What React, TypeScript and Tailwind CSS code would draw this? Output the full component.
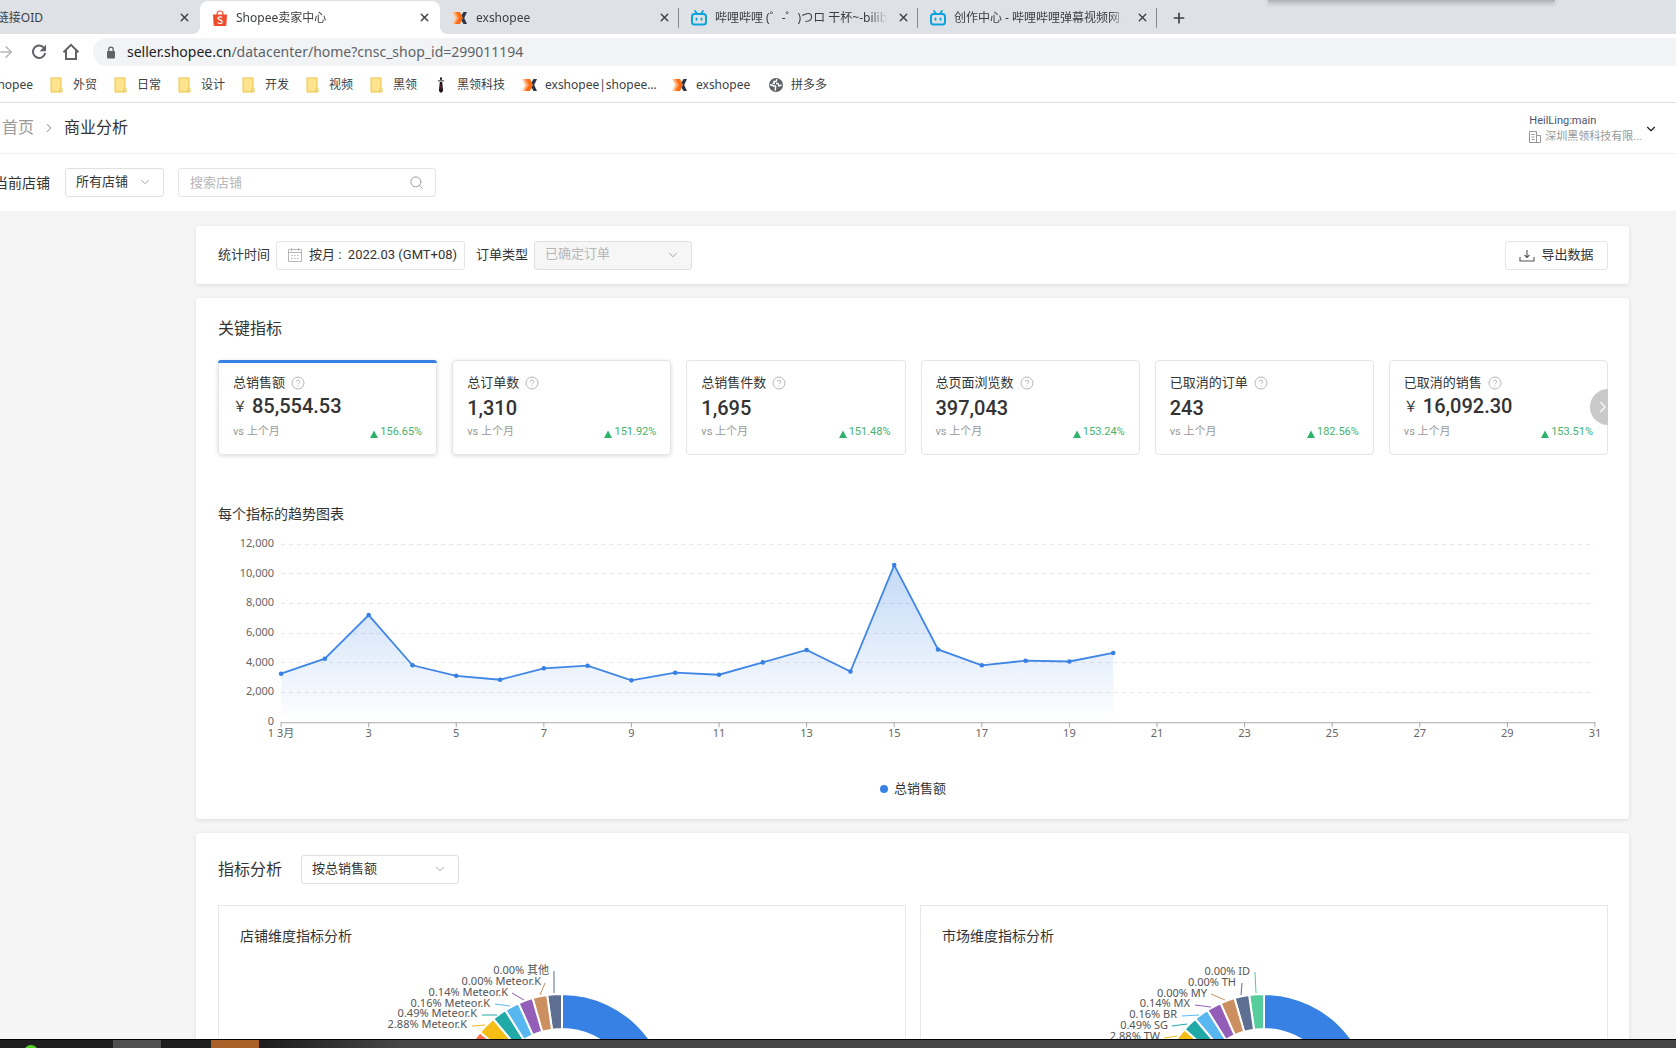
import React from 'react';
import { ArrowRight, Plus, X, ChevronDown, ChevronRight, Search } from 'lucide-react';

const CJK = "font-['Noto_Sans','Noto_Sans_CJK_SC',sans-serif]";

/* ---------- 图标 ---------- */

const ShopeeIcon: React.FC = () => (
  <svg viewBox="0 0 16 16" className="size-4 shrink-0" aria-hidden="true">
    <path d="M5 5V4a3 3 0 0 1 6 0v1" fill="none" stroke="#ee4d2d" strokeWidth="1.2" />
    <path d="M1 4.5h14l-.6 10.2a1.3 1.3 0 0 1-1.3 1.3H2.9a1.3 1.3 0 0 1-1.3-1.3z" fill="#ee4d2d" />
    <path
      d="M10.2 7.4C9.4 6.7 6 6.2 6 8.2c0 2 4.3 1.4 4.3 3.6 0 2.3-3.5 1.900-4.600.8"
      fill="none"
      stroke="#fff"
      strokeWidth="1.2"
    />
  </svg>
);

const ExIcon: React.FC = () => (
  <svg viewBox="0 0 16 16" className="size-4 shrink-0" aria-hidden="true">
    <path d="M0 2h2.5l3.5 6-3.5 6H0l3-6z" fill="#ffc9a3" />
    <path d="M2 2h2.5l3.5 6-3.5 6H2l3-6z" fill="#ff9a55" />
    <path d="M4 2h4l3 6-3 6H3.5L7 8z" fill="#ff6a13" />
    <path d="M15 2h-3.5L9.5 5.5 11 8l-1.5 2.5 2 3.5H15l-2.800-6z" fill="#2c3547" />
  </svg>
);

const BiliIcon: React.FC = () => (
  <svg viewBox="0 0 16 16" className="size-4 shrink-0" fill="none" stroke="#0ba3dc" strokeLinecap="round" aria-hidden="true">
    <rect x="1" y="4" width="14" height="10.5" rx="2.5" strokeWidth="2" />
    <path d="M4 1l2 2.5M12 1l-2 2.5" strokeWidth="1.8" />
    <path d="M5.5 8.3v1.5M10.5 8.3v1.5" strokeWidth="1.8" />
  </svg>
);

const FolderIcon: React.FC = () => (
  <svg viewBox="0 0 13 16" className="h-4 w-[13px] shrink-0" aria-hidden="true">
    <path d="M1 1h10v9.5l1 1V15H1z" fill="#ffe48f" stroke="#e8c547" />
    <path d="M9.500 14.800v-2.500L11 10.500" fill="none" stroke="#e8c547" />
  </svg>
);

const TieIcon: React.FC = () => (
  <svg viewBox="0 0 16 16" className="size-4 shrink-0" aria-hidden="true">
    <path d="M5 3.2h6v1.2H5z" fill="#555" />
    <path d="M7 .5h2v2.2H7zM6.8 5h2.4l.9 9L8 16l-2.100-2z" fill="#1d1518" />
    <path d="M7.5 8h1v4h-1z" fill="#7a2626" />
  </svg>
);

const GlobeIcon: React.FC = () => (
  <svg viewBox="0 0 16 16" className="size-4 shrink-0" aria-hidden="true">
    <circle cx="8" cy="8" r="7" fill="#5f6368" />
    <path
      d="M9 2.200L8 4.500H6v2H4.500M8 6.500h2l1 2.500 2.500-1M2 7.500l3.500 1.500h2v2.500L7 13.500"
      fill="none"
      stroke="#fff"
      strokeWidth="1.5"
    />
  </svg>
);

const ReloadIcon: React.FC = () => (
  <svg viewBox="0 0 16 16" className="size-4" aria-hidden="true">
    <path d="M13.3 4.3A6.2 6.2 0 1 0 14.2 9" fill="none" stroke="#5f6368" strokeWidth="2" />
    <path d="M15 .8v6.4H8.6z" fill="#5f6368" />
  </svg>
);

const HomeIcon: React.FC = () => (
  <svg viewBox="0 0 18 18" className="size-[18px]" aria-hidden="true">
    <path d="M1.5 9.2L9 1.8l7.5 7.4M4 7.5V16h10V7.5" fill="none" stroke="#5f6368" strokeWidth="2" />
  </svg>
);

const LockIcon: React.FC = () => (
  <svg viewBox="0 0 10 13" className="h-[13px] w-[10px] shrink-0" aria-hidden="true">
    <rect x="1" y="5" width="8" height="7.500" rx="1" fill="#5f6368" />
    <path d="M2.800 5.500V3.300a2.200 2.200 0 0 1 4.400 0v2.200" fill="none" stroke="#5f6368" strokeWidth="1.300" />
  </svg>
);

const HelpIcon: React.FC = () => (
  <svg viewBox="0 0 14 14" className="size-[14px]" fill="none" stroke="#b7b7b7" aria-hidden="true">
    <circle cx="7" cy="7" r="6" />
    <path d="M5.3 5.7a1.7 1.7 0 1 1 2.5 1.5c-.5.3-.8.5-.8 1.100M7 9.5v1" />
  </svg>
);

const CalendarIcon: React.FC = () => (
  <svg viewBox="0 0 14 14" className="size-[14px]" fill="none" stroke="#b7b7b7" aria-hidden="true">
    <path d="M.5 1.500h13v12H.5zM.5 4.500h13M3.500 0v3M10.500 0v3" />
    <path d="M3 7.500h8M3 10.500h8" strokeDasharray="1.5 1.5" />
  </svg>
);

const ExportIcon: React.FC = () => (
  <svg viewBox="0 0 16 14" className="h-[14px] w-4" fill="none" stroke="#555" aria-hidden="true">
    <path d="M1 9v4h14V9M8 2v7.500M5.500 7L8 9.500 10.500 7" strokeWidth="1.1" />
  </svg>
);

const CompanyIcon: React.FC = () => (
  <svg viewBox="0 0 12 12" className="size-3 shrink-0" fill="none" stroke="#999" aria-hidden="true">
    <path d="M.5 11.5V.5h7v11zM7.5 4.5h4v7h-11M2.5 3.5h3M2.5 6h3M2.5 8.5h3" />
  </svg>
);

/* ---------- 浏览器外壳 ---------- */

interface TabItem {
  title: string;
  icon: React.ReactNode;
  active?: boolean;
}

const tabs: TabItem[] = [
  { title: 'Shopee卖家中心', icon: <ShopeeIcon />, active: true },
  { title: 'exshopee', icon: <ExIcon /> },
  { title: '哔哩哔哩 (゜-゜)つロ 干杯~-bilibili', icon: <BiliIcon /> },
  { title: '创作中心 - 哔哩哔哩弹幕视频网 - bilibili', icon: <BiliIcon /> },
];

const folders = ['外贸', '日常', '设计', '开发', '视频', '黑领'];

const CloseButton: React.FC = () => (
  <button aria-label="关闭标签页" className="flex size-4 shrink-0 items-center justify-center text-[#3c4043]">
    <X size={13} strokeWidth={2.5} />
  </button>
);

const BrowserChrome: React.FC = () => (
  <header className={`${CJK} shrink-0 bg-white text-xs text-[#3c4043]`}>
    <div className="relative flex h-[34px] items-center bg-[#dee1e6] pt-px">
      <div className="flex w-[200px] shrink-0 items-center justify-between pr-2">
        <button className="flex w-[43px] justify-end overflow-hidden whitespace-nowrap">链接OID</button>
        <CloseButton />
      </div>
      {tabs.map((tab) => (
        <React.Fragment key={tab.title}>
          <div
            className={`relative flex shrink-0 items-center gap-2 pl-3 ${
              tab.active
                ? 'h-full w-[240px] rounded-t-lg bg-white pr-2 before:absolute before:bottom-0 before:-left-2 before:size-2 before:bg-[radial-gradient(circle_at_0_0,#dee1e6_8px,white_8px)] after:absolute after:-right-2 after:bottom-0 after:size-2 after:bg-[radial-gradient(circle_at_100%_0,#dee1e6_8px,white_8px)]'
                : 'w-[238px] pr-[6px]'
            }`}
          >
            {tab.icon}
            <button className="min-w-0 flex-1 overflow-hidden mask-[linear-gradient(to_right,black_90%,transparent)] text-left whitespace-nowrap">
              {tab.title}
            </button>
            <CloseButton />
          </div>
          {!tab.active && <span className="h-5 w-px shrink-0 bg-[#85888c]" />}
        </React.Fragment>
      ))}
      <button aria-label="新建标签页" className="ml-[14px] text-[#3c4043]">
        <Plus size={16} strokeWidth={2.5} />
      </button>
      <div className="absolute top-0 right-[121px] h-[2px] w-[287px] bg-[#b4b6ba] shadow-[0_1px_4px_rgba(0,0,0,0.35)]" />
    </div>

    <div className="flex items-center pt-1">
      <button aria-label="前进" className="flex w-[15px] justify-end overflow-hidden text-[#b4b6b9]">
        <ArrowRight size={18} className="shrink-0" />
      </button>
      <button aria-label="重新加载" className="ml-4">
        <ReloadIcon />
      </button>
      <button aria-label="主页" className="ml-[15px]">
        <HomeIcon />
      </button>
      <div className="ml-[13px] flex h-7 flex-1 items-center gap-[11px] rounded-l-full bg-[#f1f3f4] pl-[13px]">
        <LockIcon />
        <div role="textbox" aria-label="地址栏" className="text-sm whitespace-nowrap text-[#5f6368]">
          <span className="text-[#202124]">seller.shopee.cn</span>/datacenter/home?cnsc_shop_id=299011194
        </div>
      </div>
    </div>

    <nav className="flex h-[37px] items-center border-b border-[#dadce0] pt-[2px] whitespace-nowrap">
      <a href="#" className="flex w-[33px] justify-end overflow-hidden">
        shopee
      </a>
      {folders.map((name) => (
        <a key={name} href="#" className="flex w-16 items-center gap-[10px] pl-[17px]">
          <FolderIcon />
          {name}
        </a>
      ))}
      <a href="#" className="ml-4 flex w-[73px] items-center gap-2">
        <TieIcon />
        黑领科技
      </a>
      <a href="#" className="ml-4 flex w-[134px] items-center gap-[7px]">
        <ExIcon />
        exshopee|shopee...
      </a>
      <a href="#" className="ml-4 flex w-20 items-center gap-2">
        <ExIcon />
        exshopee
      </a>
      <a href="#" className="ml-4 flex items-center gap-[7px]">
        <GlobeIcon />
        拼多多
      </a>
    </nav>
  </header>
);

/* ---------- 通用控件 ---------- */

interface SelectProps {
  id: string;
  label: string;
  value: string;
  width: string;
  disabled?: boolean;
}

const Select: React.FC<SelectProps> = ({ id, label, value, width, disabled }) => (
  <div className={`relative ${width}`}>
    <select
      id={id}
      aria-label={label}
      disabled={disabled}
      className="h-[29px] w-full appearance-none rounded-[3px] border border-[#e0e0e0] bg-white pb-[2px] pl-[10px] text-[13px] text-[#333] disabled:bg-[#f6f6f6] disabled:text-[#b7b7b7] disabled:opacity-100"
    >
      <option>{value}</option>
    </select>
    <ChevronDown
      size={14}
      strokeWidth={1.5}
      className="pointer-events-none absolute top-[7px] right-3 text-[#999]"
    />
  </div>
);

/* ---------- 关键指标 ---------- */

interface Metric {
  label: string;
  value: string;
  rate: string;
  money?: boolean;
}

const metrics: Metric[] = [
  { label: '总销售额', value: '85,554.53', rate: '156.65%', money: true },
  { label: '总订单数', value: '1,310', rate: '151.92%' },
  { label: '总销售件数', value: '1,695', rate: '151.48%' },
  { label: '总页面浏览数', value: '397,043', rate: '153.24%' },
  { label: '已取消的订单', value: '243', rate: '182.56%' },
  { label: '已取消的销售', value: '16,092.30', rate: '153.51%', money: true },
];

const MetricCard: React.FC<{ metric: Metric; index: number }> = ({ metric, index }) => (
  <div
    className={`relative h-[95px] rounded-[4px] border border-[#e5e5e5] px-[14px] pt-[11px] ${
      index < 2 ? 'shadow-[0_1px_4px_rgba(0,0,0,0.14)]' : ''
    }`}
  >
    {index === 0 && <span className="absolute -inset-x-px -top-px h-[3px] rounded-t-[4px] bg-[#3781e4]" />}
    <div className="flex h-[21px] items-center gap-[6px] text-[13px]">
      {metric.label}
      <HelpIcon />
    </div>
    <div className={`flex h-[29px] items-center text-xl font-medium ${metric.money ? 'pb-[3px]' : ''}`}>
      {metric.money && <span className="mr-[5px] text-sm font-normal">￥</span>}
      {metric.value}
    </div>
    <div className="flex h-5 items-center justify-between text-[11px] text-[#999]">
      <span>vs 上个月</span>
      <span className="flex items-center gap-[2px] text-[#45b36b]">
        <svg viewBox="0 0 8 8" className="mt-1 size-2" aria-hidden="true">
          <path d="M4 .5L8 8H0z" fill="#2db46a" />
        </svg>
        {metric.rate}
      </span>
    </div>
  </div>
);

/* ---------- 趋势图 ---------- */

const sales = [
  3262, 4275, 7213, 3829, 3120, 2857, 3626, 3802, 2816, 3330, 3194, 4025, 4862, 3410, 10580, 4896, 3830, 4140, 4085,
  4660,
];

const X0 = 63;
const X1 = 1376;
const Y0 = 198;
const Y1 = 20;

const dayX = (day: number) => X0 + ((day - 1) * (X1 - X0)) / 30;
const valueY = (v: number) => Y0 - (v * (Y0 - Y1)) / 12000;

const TrendChart: React.FC = () => {
  const points = sales.map((v, i) => `${dayX(i + 1)},${valueY(v)}`).join(' ');
  const ticks = [0, 2000, 4000, 6000, 8000, 10000, 12000];
  const days = Array.from({ length: 16 }, (_, i) => i * 2 + 1);

  return (
    <svg viewBox="0 0 1389 236" className={`${CJK} block w-full text-[11px]`} role="img" aria-label="每个指标的趋势图表">
      <defs>
        <linearGradient id="area" x1="0" y1="0" x2="0" y2="1">
          <stop offset="0" stopColor="#3781e4" stopOpacity="0.3" />
          <stop offset="1" stopColor="#3781e4" stopOpacity="0" />
        </linearGradient>
      </defs>
      {ticks.map((t) => (
        <g key={t}>
          {t > 0 && (
            <line
              x1={X0}
              x2={X1}
              y1={Math.floor(valueY(t)) + 0.5}
              y2={Math.floor(valueY(t)) + 0.5}
              stroke="#e6e6e6"
              strokeDasharray="4 4"
            />
          )}
          <text x="56" y={valueY(t) + 3} textAnchor="end" fill="#666">
            {t.toLocaleString('en-US')}
          </text>
        </g>
      ))}
      <line x1={X0} x2={X1} y1="198.5" y2="198.5" stroke="#aaa" />
      {days.map((d) => (
        <g key={d}>
          <line x1={dayX(d)} x2={dayX(d)} y1="198" y2="203" stroke="#aaa" />
          <text x={dayX(d)} y="213" textAnchor="middle" fill="#666">
            {d === 1 ? '1 3月' : d}
          </text>
        </g>
      ))}
      <polygon points={`${X0},${Y0} ${points} ${dayX(sales.length)},${Y0}`} fill="url(#area)" />
      <polyline points={points} fill="none" stroke="#3f86e6" strokeWidth="1.8" />
      {sales.map((v, i) => (
        <circle key={i} cx={dayX(i + 1)} cy={valueY(v)} r="2.3" fill="#3781e4" />
      ))}
    </svg>
  );
};

/* ---------- 环形图 ---------- */

interface Slice {
  color: string;
  label: string;
  x: number;
  y: number;
  // 引导线
  line: [number, number, number, number];
}

const shopSlices: Slice[] = [
  { color: '#5d6f92', label: '0.00% 其他', x: 330, y: 28, line: [335, 25, 335, 47] },
  { color: '#cc8f60', label: '0.00% Meteor.K', x: 322, y: 39, line: [326, 37, 321, 49] },
  { color: '#935eb8', label: '0.14% Meteor.K', x: 289, y: 50, line: [293, 47, 305, 54] },
  { color: '#58b7f0', label: '0.16% Meteor.K', x: 271, y: 61, line: [276, 58, 291, 60] },
  { color: '#21a9a8', label: '0.49% Meteor.K', x: 258, y: 71, line: [263, 69, 278, 69] },
  { color: '#f6bd16', label: '2.88% Meteor.K', x: 248, y: 82, line: [253, 80, 266, 79] },
];

const marketSlices: Slice[] = [
  { color: '#55ce9c', label: '0.00% ID', x: 329, y: 29, line: [334, 26, 335, 47] },
  { color: '#5d6f92', label: '0.00% TH', x: 315, y: 40, line: [321, 37, 320, 49] },
  { color: '#cc8f60', label: '0.00% MY', x: 286, y: 51, line: [290, 48, 304, 54] },
  { color: '#935eb8', label: '0.14% MX', x: 269, y: 61, line: [274, 59, 290, 61] },
  { color: '#58b7f0', label: '0.16% BR', x: 256, y: 72, line: [261, 70, 278, 69] },
  { color: '#21a9a8', label: '0.49% SG', x: 247, y: 83, line: [251, 80, 266, 78] },
  { color: '#f6bd16', label: '2.88% TW', x: 239, y: 94, line: [243, 92, 256, 90] },
];

const ring = (from: number, to: number) => {
  const at = (r: number, deg: number) => {
    const a = (deg * Math.PI) / 180;
    return `${343 + r * Math.sin(a)} ${155 - r * Math.cos(a)}`;
  };
  const large = to - from > 180 ? 1 : 0;
  return `M${at(107, from)}A107 107 0 ${large} 1 ${at(107, to)}L${at(72, to)}A72 72 0 ${large} 0 ${at(72, from)}Z`;
};

const DonutPanel: React.FC<{ title: string; slices: Slice[] }> = ({ title, slices }) => {
  const end = -slices.length * 8 - 2;
  return (
    <section className="border border-[#e8e8e8] pt-5">
      <h3 className="px-[21px] text-sm leading-5">{title}</h3>
      <svg viewBox="0 0 686 280" className={`${CJK} block w-full text-[11px]`} role="img" aria-label={title}>
        <g stroke="#fff" strokeWidth="2">
          <path d={ring(0, 215)} fill="#3781e4" />
          <path d={ring(215, 360 + end)} fill="#ff7350" />
          {slices.map((s, i) => (
            <path key={s.label} d={ring(i === slices.length - 1 ? end : -(i + 1) * 8, -i * 8)} fill={s.color} />
          ))}
        </g>
        {slices.map((s) => (
          <g key={s.label}>
            <line x1={s.line[0]} y1={s.line[1]} x2={s.line[2]} y2={s.line[3]} stroke={s.color} />
            <text x={s.x} y={s.y} textAnchor="end" fill="#555">
              {s.label}
            </text>
          </g>
        ))}
      </svg>
    </section>
  );
};

const Taskbar: React.FC = () => (
  <footer className="flex h-[9px] shrink-0 overflow-hidden border-t border-black bg-[#1f1f1f]">
    <div className="w-[113px] pt-[5px] pl-6">
      <div className="h-3 w-[14px] rounded-t-full bg-[#54cf2a]" />
    </div>
    <div className="w-12 bg-[#505050]" />
    <div className="w-[50px]" />
    <div className="w-12 bg-[#a95f28]" />
    <div className="flex-1 bg-[linear-gradient(to_right,#1c1c1c,#454545_140px)]" />
  </footer>
);

const card = 'rounded-[3px] bg-white pr-[21px] pl-[22px] shadow-[0_1px_4px_rgba(0,0,0,0.1)]';

const App: React.FC = () => (
  <div className="flex h-screen flex-col overflow-hidden bg-[#f5f5f5] font-[Roboto,'Noto_Sans_CJK_SC',sans-serif] text-[#333]">
    <BrowserChrome />

    <main className="min-h-0 flex-1 overflow-hidden">
      {/* 面包屑 */}
      <div className="flex h-[51px] items-center justify-between border-b border-[#f0f0f0] bg-white pr-[18px] pl-[2px]">
        <nav className="flex items-center gap-2 text-base">
          <a href="#" className="text-[#999]">
            首页
          </a>
          <ChevronRight size={14} strokeWidth={1.8} className="text-[#999]" />
          <span>商业分析</span>
        </nav>
        <button className="flex items-center gap-[2px] pt-[2px] text-left text-[11px] leading-4">
          <span>
            <span className="block text-[#4d5469]">HeilLing:main</span>
            <span className="flex items-center gap-1 text-[#999]">
              <CompanyIcon />
              深圳黑领科技有限...
            </span>
          </span>
          <ChevronDown size={14} className="text-[#222]" />
        </button>
      </div>

      {/* 店铺筛选 */}
      <div className="flex h-[57px] items-center bg-white">
        <label htmlFor="shop" className="mr-[15px] flex w-[50px] justify-end overflow-hidden text-sm whitespace-nowrap">
          当前店铺
        </label>
        <Select id="shop" label="当前店铺" value="所有店铺" width="w-[99px]" />
        <div className="relative ml-[14px] w-[258px]">
          <input
            aria-label="搜索店铺"
            placeholder="搜索店铺"
            className="h-[29px] w-full rounded-[3px] border border-[#e5e5e5] px-[11px] text-[13px] placeholder:text-[#b7b7b7]"
          />
          <Search size={15} strokeWidth={1.5} className="absolute top-[7px] right-3 text-[#999]" />
        </div>
      </div>

      <div className="mt-[15px] mr-[47px] ml-[196px] flex flex-col gap-[14px]">
        <section className={`${card} flex h-[58px] items-center text-[13px]`}>
          <span>统计时间</span>
          <button className="ml-[6px] flex h-[29px] w-[189px] items-center gap-[7px] rounded-[3px] border border-[#e5e5e5] pl-[11px] whitespace-nowrap">
            <CalendarIcon />
            <span>按月 : &nbsp;2022.03 (GMT+08)</span>
          </button>
          <label htmlFor="order-type" className="mr-[6px] ml-[11px]">
            订单类型
          </label>
          <Select id="order-type" label="订单类型" value="已确定订单" width="w-[158px]" disabled />
          <button className="ml-auto flex h-[29px] w-[103px] items-center justify-center gap-[6px] rounded-[3px] border border-[#e5e5e5]">
            <ExportIcon />
            导出数据
          </button>
        </section>

        <section className={`${card} pt-[19px] pb-5`}>
          <h2 className="text-base leading-6">关键指标</h2>
          <div className="relative mt-[19px] grid grid-cols-6 gap-[15px]">
            {metrics.map((m, i) => (
              <MetricCard key={m.label} metric={m} index={i} />
            ))}
            <button
              aria-label="下一组指标"
              className="absolute top-[29px] right-0 flex h-9 w-[18px] items-center justify-end rounded-l-full bg-[#c9c9c9] text-white"
            >
              <ChevronRight size={18} strokeWidth={1.5} className="-mr-1 shrink-0" />
            </button>
          </div>

          <h3 className="mt-[49px] text-sm leading-5">每个指标的趋势图表</h3>
          <TrendChart />
          <div className="mt-[19px] flex h-5 items-center justify-center gap-[6px] text-[13px]">
            <span className="size-2 rounded-full bg-[#3781e4]" />
            总销售额
          </div>
        </section>

        <section className={`${card} pt-[22px] pb-5`}>
          <div className="flex items-center gap-[19px]">
            <h2 className="text-base leading-6">指标分析</h2>
            <Select id="metric" label="指标分析" value="按总销售额" width="w-[158px]" />
          </div>
          <div className="mt-[21px] grid grid-cols-2 gap-[14px]">
            <DonutPanel title="店铺维度指标分析" slices={shopSlices} />
            <DonutPanel title="市场维度指标分析" slices={marketSlices} />
          </div>
        </section>
      </div>
    </main>

    <Taskbar />
  </div>
);

export default App;
